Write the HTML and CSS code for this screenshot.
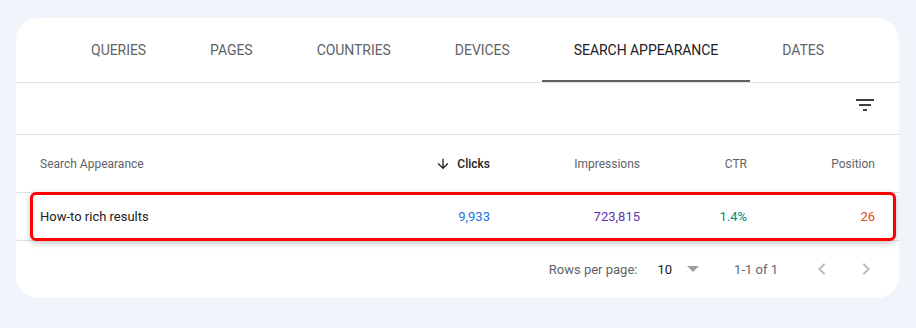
FILE: index.html
```html
<!DOCTYPE html>
<html lang="en">
<head>
  <meta charset="UTF-8">
  <title>Performance</title>
  <link rel="stylesheet" href="styles.css">
</head>
<body>
  <div class="card">
    <nav class="tabs">
      <div class="tab">QUERIES</div>
      <div class="tab">PAGES</div>
      <div class="tab">COUNTRIES</div>
      <div class="tab">DEVICES</div>
      <div class="tab active">SEARCH APPEARANCE</div>
      <div class="tab">DATES</div>
    </nav>

    <div class="toolbar">
      <svg class="filter-icon" width="24" height="24" viewBox="0 0 24 24">
        <path d="M3 6h18v2H3zM6 11h12v2H6zM10 16h4v2h-4z" fill="#3c4043"/>
      </svg>
    </div>

    <div class="row head">
      <div class="cell name">Search Appearance</div>
      <div class="cell num sorted">
        <svg width="16" height="16" viewBox="0 0 24 24"><path d="M20 12l-1.41-1.41L13 16.17V4h-2v12.17l-5.58-5.59L4 12l8 8 8-8z" fill="#202124"/></svg>
        Clicks
      </div>
      <div class="cell num">Impressions</div>
      <div class="cell num">CTR</div>
      <div class="cell num">Position</div>
    </div>

    <div class="row data">
      <div class="cell name">How-to rich results</div>
      <div class="cell num clicks">9,933</div>
      <div class="cell num impressions">723,815</div>
      <div class="cell num ctr">1.4%</div>
      <div class="cell num position">26</div>
      <div class="highlight"></div>
    </div>

    <div class="pager">
      <span class="rows-label">Rows per page:</span>
      <span class="rows-value">10</span>
      <span class="caret"></span>
      <span class="range">1-1 of 1</span>
      <svg class="chev" width="24" height="24" viewBox="0 0 24 24"><path d="M15.41 7.41L14 6l-6 6 6 6 1.41-1.41L10.83 12z" fill="#bdbdbd"/></svg>
      <svg class="chev" width="24" height="24" viewBox="0 0 24 24"><path d="M10 6L8.59 7.41 13.17 12l-4.58 4.59L10 18l6-6z" fill="#bdbdbd"/></svg>
    </div>
  </div>
</body>
</html>
```

FILE: styles.css
```css
body {
  margin: 0;
  padding: 18px 17px 30px 16px;
  background-color: #f0f4fb;
  font-family: Roboto, Arial, sans-serif;
  color: #202124;
}
.card {
  background: white;
  border-radius: 22px;
  height: 280px;
  overflow: hidden;
}
.tabs {
  display: flex;
  justify-content: center;
  height: 64px;
  border-bottom: 1px solid #e0e0e0;
}
.tab {
  display: flex;
  align-items: center;
  padding: 0 32px;
  padding-top: 2px;
  font-size: 14px;
  letter-spacing: -0.05px;
  color: #5f6368;
  border-bottom: 2px solid transparent;
}
.tab.active {
  color: #202124;
  border-bottom-color: #616161;
}
.toolbar {
  display: flex;
  justify-content: flex-end;
  align-items: center;
  height: 52px;
  padding-right: 22px;
  padding-bottom: 7px;
  box-sizing: border-box;
  border-bottom: 1px solid #e0e0e0;
}
.row {
  display: grid;
  grid-template-columns: 300px 150px 150px 107px 128px;
  padding: 0 24px;
  align-items: center;
  border-bottom: 1px solid #e0e0e0;
}
.row.head {
  height: 57px;
  font-size: 12px;
  color: #5f6368;
}
.row.data {
  position: relative;
  height: 47px;
  font-size: 13px;
}
.cell.num {
  text-align: right;
}
.sorted {
  display: flex;
  justify-content: flex-end;
  align-items: center;
  gap: 6px;
  color: #202124;
  font-weight: 500;
}
.clicks { color: #1a73e8; }
.impressions { color: #5e35b1; }
.ctr { color: #00897b; }
.position { color: #e04a16; }
.highlight {
  position: absolute;
  left: 14px;
  right: 3px;
  top: -1px;
  bottom: -1px;
  border: 3px solid #ff0000;
  border-radius: 6px;
  box-shadow: 0 2px 6px rgba(0, 0, 0, 0.25);
}
.pager {
  display: flex;
  justify-content: flex-end;
  align-items: center;
  height: 56px;
  padding-right: 21px;
  font-size: 13px;
  color: #5f6368;
}
.rows-value {
  margin-left: 20px;
  color: #202124;
}
.caret {
  width: 0;
  height: 0;
  border-left: 6px solid transparent;
  border-right: 6px solid transparent;
  border-top: 6px solid #9e9e9e;
  margin-left: 15px;
}
.range {
  margin-left: 35px;
}
.chev {
  margin-left: 32px;
}
.chev + .chev {
  margin-left: 20px;
}
```
